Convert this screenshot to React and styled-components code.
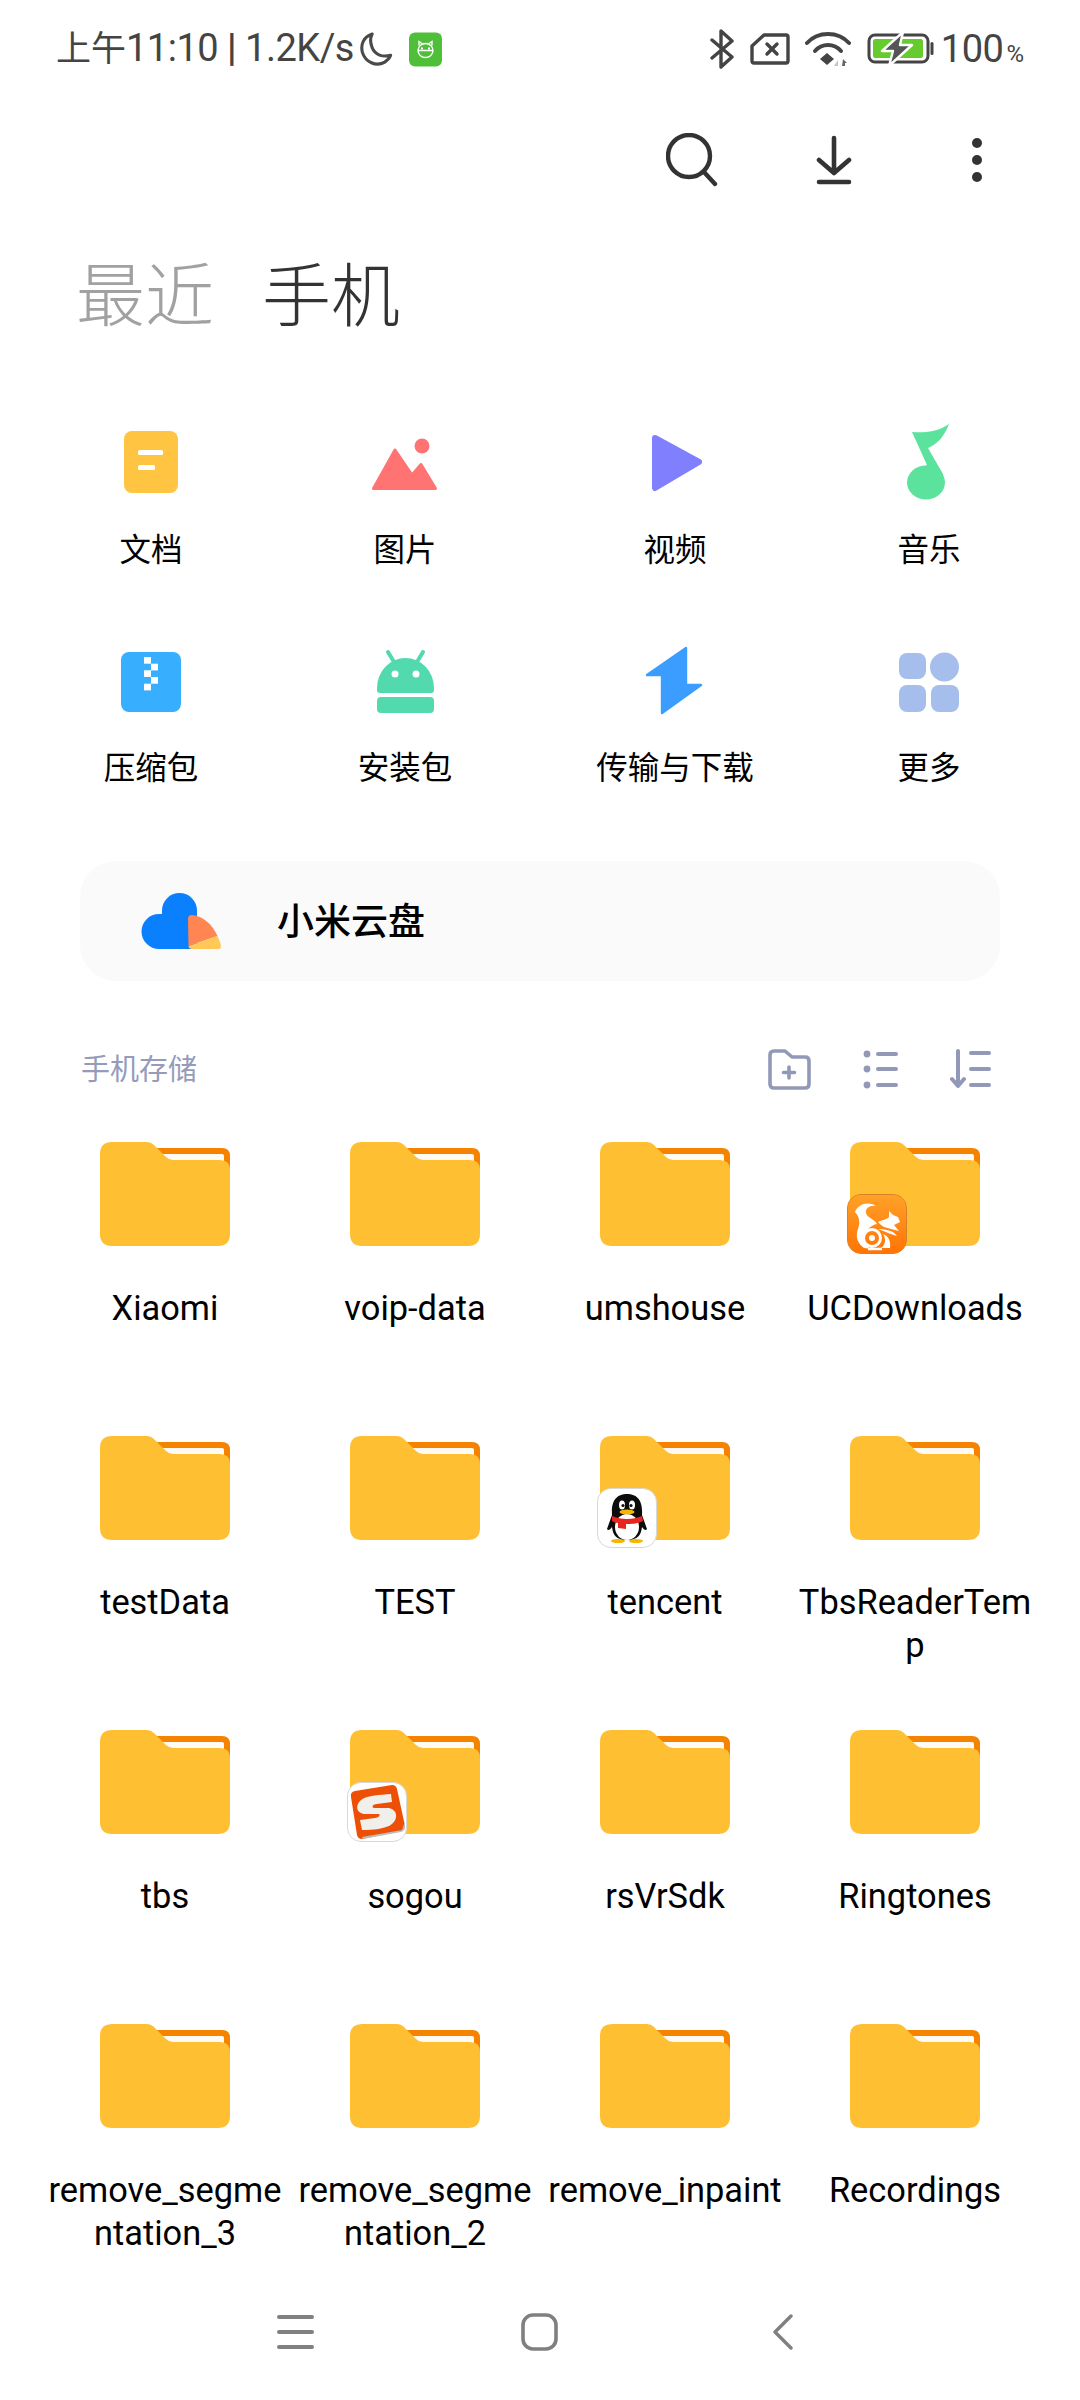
import styled, { createGlobalStyle } from "styled-components";

const GlobalStyle = createGlobalStyle`
  html, body {
    margin: 0;
    padding: 0;
    background: #fff;
  }
  * {
    box-sizing: border-box;
  }
`;

const Page = styled.div`
  width: 1080px;
  height: 2400px;
  display: flex;
  flex-direction: column;
  background: #fff;
  overflow: hidden;
  font-family: Roboto, "Noto Sans CJK SC", sans-serif;
  color: #000;
`;

const StatusBar = styled.div`
  height: 98px;
  padding: 0 56px 0 56px;
  display: flex;
  justify-content: space-between;
  align-items: center;
`;

const StatusGroup = styled.div`
  display: flex;
  align-items: center;
`;

const StatusText = styled.span`
  font-size: 38px;
  line-height: 40px;
  letter-spacing: -0.5px;
  color: #444;
  white-space: pre;
`;

const StatusCjk = styled.span`
  font-size: 35px;
  letter-spacing: 0;
`;

const StatusPipe = styled.span`
  font-weight: 700;
`;

const PercentSign = styled.span`
  font-size: 24px;
  margin-left: 3px;
  color: #444;
`;

const IconSlot = styled.span`
  display: flex;
  margin-left: ${(p) => p.$left || 0}px;
`;

const BatteryLevel = styled.span`
  display: flex;
  align-items: baseline;
  margin-left: 6px;
`;

const Toolbar = styled.div`
  height: 124px;
  padding-right: 32px;
  display: flex;
  justify-content: flex-end;
  align-items: center;
`;

const ToolButton = styled.div`
  width: 142.5px;
  display: flex;
  justify-content: center;
`;

const Tabs = styled.div`
  height: 146px;
  padding: 6px 0 0 76px;
  display: flex;
  align-items: center;
  gap: 48px;
`;

const Tab = styled.div`
  font-size: 69px;
  font-weight: 300;
  line-height: 80px;
  color: ${(p) => (p.$active ? "#333" : "#a1a1a1")};
`;

const Categories = styled.div`
  padding: 49px 24px 0;
  display: flex;
  gap: 16px;
`;

const CategoryHalf = styled.div`
  display: grid;
  grid-template-columns: repeat(2, 254px);
  row-gap: 62px;
`;

const Category = styled.div`
  display: flex;
  flex-direction: column;
  align-items: center;
`;

const CategoryIcon = styled.div`
  width: 90px;
  height: 90px;
  margin-bottom: 22px;
`;

const CategoryLabel = styled.div`
  font-size: 31.5px;
  line-height: 44px;
  white-space: nowrap;
`;

const CloudCard = styled.div`
  margin: 70px 80px 0;
  height: 120px;
  padding-left: 61px;
  border-radius: 36px;
  background: #fafafa;
  display: flex;
  align-items: center;
  gap: 56px;
`;

const CloudLabel = styled.div`
  font-size: 37px;
  font-weight: 500;
  padding-bottom: 5px;
`;

const SectionHeader = styled.div`
  margin-top: 58px;
  height: 60px;
  padding: 0 89px 0 81px;
  display: flex;
  align-items: center;
  justify-content: space-between;
`;

const SectionTitle = styled.div`
  font-size: 29px;
  padding-bottom: 4px;
  color: #959bba;
`;

const SectionTools = styled.div`
  display: flex;
  align-items: center;
  gap: 52px;
`;

const FolderGrid = styled.div`
  margin-top: 43px;
  padding: 0 40px;
  display: grid;
  grid-template-columns: repeat(4, 250px);
  grid-auto-rows: 226px;
  row-gap: 68px;
`;

const FolderCell = styled.div`
  display: flex;
  flex-direction: column;
  align-items: center;
`;

const FolderArt = styled.div`
  position: relative;
  width: 130px;
  height: 104px;
  margin-bottom: 41px;
`;

const Badge = styled.div`
  position: absolute;
  left: -3px;
  bottom: -8px;
  width: 60px;
  height: 60px;
  border-radius: 14px;
  overflow: hidden;
  border: 1px solid ${(p) => p.$edge || "#d8d8d8"};
  background: ${(p) => p.$bg || "#fff"};
`;

const FolderName = styled.div`
  width: 236px;
  font-size: 34.4px;
  line-height: 43px;
  text-align: center;
  word-break: break-all;
`;

const NavBar = styled.div`
  margin-top: auto;
  height: 136px;
  display: flex;
  align-items: center;
  padding-left: 277px;
`;

const NavSlot = styled.div`
  display: flex;
  margin-left: ${(p) => p.$left || 0}px;
`;

const MoonIcon = () => (
  <svg width="34" height="35" viewBox="0 0 34 36" fill="none" stroke="#4a4a4a" strokeWidth="3.2" strokeLinejoin="round">
    <path d="M13 2 C4 5 1 13 3 21 C6 31 17 36 26 31 C29 29 31 27 32 24 C24 26 16 24 13 16 C11 11 11 6 13 2Z" />
  </svg>
);

const RobotBadge = () => (
  <svg width="33" height="35" viewBox="0 0 33 34">
    <rect width="33" height="34" rx="6" fill="#4fbf3a" />
    <g fill="none" stroke="#fff" strokeWidth="1.4">
      <ellipse cx="16.5" cy="18" rx="7.5" ry="7" />
      <path d="M10 13 L10 9 L13 11 M23 13 L23 9 L20 11 M9 18 H24" />
    </g>
    <rect x="12" y="15" width="2" height="2" fill="#fff" />
    <rect x="19" y="15" width="2" height="2" fill="#fff" />
  </svg>
);

const BluetoothIcon = () => (
  <svg width="24" height="40" viewBox="0 0 24 40" fill="none" stroke="#444" strokeWidth="3.4" strokeLinecap="round" strokeLinejoin="round">
    <path d="M2 11 L22 28 L11 38 V2 L22 12 L2 29" />
  </svg>
);

const SimIcon = () => (
  <svg width="40" height="32" viewBox="0 0 40 32" fill="none" stroke="#444" strokeWidth="3.4" strokeLinecap="round" strokeLinejoin="round">
    <path d="M14 2 H36 Q38 2 38 4 V28 Q38 30 36 30 H4 Q2 30 2 28 V13 Z" />
    <path d="M17 11 L27 21 M27 11 L17 21" />
  </svg>
);

const WifiIcon = () => (
  <svg width="46" height="34" viewBox="0 0 46 34" fill="none">
    <g stroke="#444" strokeWidth="4" strokeLinecap="round">
      <path d="M2 11 C13 -1 33 -1 44 11" />
      <path d="M10 19 C17 11 29 11 36 19" />
    </g>
    <path d="M22 21 L29 27 L22 33 L15 27 Z" fill="#444" />
    <path d="M33 28 V34 H29 Z" fill="#c4c4c4" />
    <path d="M38 27 L42 31 H40 V34 H37 Z" fill="#666" />
  </svg>
);

const BatteryIcon = () => (
  <svg width="68" height="34" viewBox="0 0 68 34">
    <rect x="2" y="3" width="59" height="27" rx="6" fill="none" stroke="#444" strokeWidth="3" />
    <rect x="6" y="7" width="50" height="19" rx="2.5" fill="#66cc2e" />
    <rect x="63.5" y="10" width="3" height="13" rx="1.5" fill="#444" />
    <path d="M36 0 L15 19 H26 L22 34 L45 13 H33 Z" fill="#555" stroke="#fff" strokeWidth="2.4" strokeLinejoin="round" />
  </svg>
);

const SearchIcon = () => (
  <svg width="52" height="54" viewBox="0 0 52 54" fill="none" stroke="#333" strokeWidth="4.4" strokeLinecap="round">
    <circle cx="23" cy="23" r="21" />
    <path d="M38 39 L49 51" />
  </svg>
);

const DownloadIcon = () => (
  <svg width="36" height="50" viewBox="0 0 36 50" fill="none" stroke="#333" strokeWidth="4.6" strokeLinecap="round" strokeLinejoin="round">
    <path d="M18 3 V38 M3 25 L18 38 L33 25 M3 47 H33" />
  </svg>
);

const MoreIcon = () => (
  <svg width="12" height="46" viewBox="0 0 12 46" fill="#333">
    <circle cx="6" cy="6" r="5" />
    <circle cx="6" cy="23" r="5" />
    <circle cx="6" cy="40" r="5" />
  </svg>
);

const DocIcon = () => (
  <svg width="90" height="90" viewBox="0 0 90 90">
    <rect x="18" y="14" width="54" height="62" rx="8" fill="#ffc542" />
    <rect x="32" y="33" width="25" height="5" rx="1.5" fill="#fff" />
    <rect x="32" y="48" width="17" height="5" rx="1.5" fill="#fff" />
  </svg>
);

const ImageIcon = () => (
  <svg width="90" height="90" viewBox="0 0 90 90" fill="#ff7373">
    <circle cx="62" cy="29" r="7.5" />
    <path d="M13.5 71.5 L35 33 L52 58 L61 47.5 L75.5 71.5 Z" stroke="#ff7373" strokeWidth="3" strokeLinejoin="round" />
  </svg>
);

const VideoIcon = () => (
  <svg width="90" height="90" viewBox="0 0 90 90">
    <path d="M25 21 L69 45 L25 71 Z" fill="#8080ff" stroke="#8080ff" strokeWidth="6" strokeLinejoin="round" />
  </svg>
);

const MusicIcon = () => (
  <svg width="90" height="90" viewBox="0 0 90 90" fill="#5be39e">
    <path d="M28 15 C44 16 55 14 65 7 C61 18 54 27 44 31 L59 57 L60 66 L40 50 L43 48 Z" />
    <ellipse cx="42" cy="65.5" rx="19" ry="17" />
  </svg>
);

const ZipIcon = () => (
  <svg width="90" height="90" viewBox="0 0 90 90">
    <rect x="15" y="17" width="60" height="60" rx="8" fill="#38aeff" />
    <g fill="#fff">
      <rect x="38" y="22" width="7" height="6.7" />
      <rect x="45" y="28.7" width="7" height="6.7" />
      <rect x="38" y="35.3" width="7" height="6.7" />
      <rect x="45" y="42" width="7" height="6.7" />
      <rect x="38" y="48.7" width="7" height="6.7" />
    </g>
  </svg>
);

const AndroidIcon = () => (
  <svg width="90" height="90" viewBox="0 0 90 90" fill="#52d9ae">
    <path d="M28 17 L34 27 M63 17 L57 27" stroke="#52d9ae" strokeWidth="4" strokeLinecap="round" />
    <path d="M17 53 A28.5 30 0 0 1 74 53 V55 Q74 58 71 58 H20 Q17 58 17 55 Z" />
    <rect x="17" y="62" width="57" height="16" rx="4" />
    <circle cx="35" cy="39" r="3.5" fill="#fff" />
    <circle cx="56" cy="39" r="3.5" fill="#fff" />
  </svg>
);

const TransferIcon = () => (
  <svg width="90" height="90" viewBox="0 0 90 90">
    <path d="M56 13 L17 40 H32 V78 L71 50 H56 Z" fill="#3b9dff" stroke="#3b9dff" strokeWidth="2.4" strokeLinejoin="round" />
  </svg>
);

const MoreAppsIcon = () => (
  <svg width="90" height="90" viewBox="0 0 90 90" fill="#a6beeb">
    <rect x="15" y="18" width="27" height="26" rx="8" />
    <circle cx="60.5" cy="32" r="14.5" />
    <rect x="15" y="50" width="27" height="27" rx="8" />
    <rect x="47" y="50" width="28" height="27" rx="8" />
  </svg>
);

const CloudIcon = () => (
  <svg width="80" height="56" viewBox="0 0 80 56">
    <path d="M18 56 A17.5 17.5 0 0 1 18 21 H21 V17.5 A17.5 17.5 0 0 1 56 17.5 V56 Z" fill="#0a80ff" />
    <path d="M47 26 Q47 22 51 22 C62 23 71 31 76.5 43 L47.5 53 Z" fill="#ff8552" />
    <path d="M47.5 53 L76.5 43 Q79 48 80 53 Q80 56 77 56 H51 Q48 56 47.5 53 Z" fill="#ffc857" />
  </svg>
);

const NewFolderIcon = () => (
  <svg width="43" height="41" viewBox="0 0 43 41" fill="none" stroke="#9299b8" strokeWidth="3.6" strokeLinecap="round" strokeLinejoin="round">
    <path d="M2 6 Q2 2 6 2 H17 L24 8 H37 Q41 8 41 12 V35 Q41 39 37 39 H6 Q2 39 2 35 Z" />
    <path d="M21 18 V29 M15.5 23.5 H26.5" />
  </svg>
);

const ListIcon = () => (
  <svg width="35" height="40" viewBox="0 0 35 40" fill="#9299b8">
    <circle cx="4" cy="5" r="3.4" />
    <circle cx="4" cy="20" r="3.4" />
    <circle cx="4" cy="36" r="3.4" />
    <rect x="13" y="3" width="22" height="4" rx="2" />
    <rect x="13" y="18" width="22" height="4" rx="2" />
    <rect x="13" y="34" width="22" height="4" rx="2" />
  </svg>
);

const SortIcon = () => (
  <svg width="41" height="40" viewBox="0 0 41 40" fill="none" stroke="#9299b8" strokeWidth="4" strokeLinecap="round" strokeLinejoin="round">
    <path d="M8 2 V36 M2 30 L8 37 L14 30" />
    <path d="M21 4 H39 M21 20 H39 M21 36 H39" />
  </svg>
);

const FolderIcon = () => (
  <svg width="130" height="104" viewBox="0 0 130 104">
    <path d="M55 6 H122 Q130 6 130 14 V34 H60 Z" fill="#f58300" />
    <path d="M60 12 H122 Q124 12 124 14 V24 H72 Z" fill="#fffbf2" />
    <path d="M12 0 H47 Q51 0 54 3 L66 15 Q69 18 73 18 H120 Q130 18 130 28 V92 Q130 104 118 104 H12 Q0 104 0 92 V12 Q0 0 12 0 Z" fill="#ffbf33" />
  </svg>
);

const UcLogo = () => (
  <svg width="58" height="58" viewBox="0 0 58 58">
    <defs>
      <linearGradient id="ucBg" x1="0" y1="0" x2="0" y2="1">
        <stop offset="0" stopColor="#ffa128" />
        <stop offset="1" stopColor="#ff7405" />
      </linearGradient>
    </defs>
    <rect width="58" height="58" fill="url(#ucBg)" />
    <path d="M7 17 C10 9 20 6 28 11 C22 10 17 13 18 18 C19 23 27 24 29 29 C23 30 16 36 17 44 C17 50 20 53 24 54 L16 53 C10 49 7 42 10 34 C12 28 12 22 7 17 Z" fill="#fff" />
    <path d="M30 27 C34 25 38 25 41 22 L41 16 L45 20 L50 22 L52 27 L46 30 L51 36 L43 34 L36 32 C34 31 32 29 30 27 Z" fill="#fff" />
    <path d="M30 34 C38 34 46 36 49 41 L40 38 C36 36 33 35 30 34 Z" fill="#fff" />
    <path d="M33 53 C38 50 38 43 35 39 C41 41 43 47 42 53 Z" fill="#fff" />
    <circle cx="24" cy="43" r="8.5" fill="none" stroke="#fff" strokeWidth="3" />
    <circle cx="24" cy="43" r="3" fill="#fff" />
    <path d="M20 54 H34" stroke="#fff" strokeWidth="2.4" />
  </svg>
);

const QqLogo = () => (
  <svg width="58" height="58" viewBox="0 0 58 58">
    <ellipse cx="20" cy="52" rx="7" ry="2" fill="#f7b500" />
    <ellipse cx="38" cy="52" rx="7" ry="2" fill="#f7b500" />
    <path d="M14 26 C13 10 20 5 29 5 C38 5 45 10 44 26 L49 40 C48 42 46 41 44 38 C43 46 40 51 29 51 C18 51 15 46 14 38 C12 41 10 42 9 40 Z" fill="#0c0c0c" />
    <ellipse cx="29" cy="38" rx="12" ry="13" fill="#fff" />
    <ellipse cx="24" cy="16" rx="3" ry="4.5" fill="#fff" />
    <ellipse cx="34" cy="16" rx="3" ry="4.5" fill="#fff" />
    <circle cx="25" cy="16.5" r="1.6" fill="#111" />
    <circle cx="33" cy="16.5" r="1.6" fill="#111" />
    <ellipse cx="29" cy="23" rx="7.5" ry="2.6" fill="#f7b500" />
    <path d="M14 27 C23 31 35 31 44 27 L45 32 C39 35 33 35 28 35 V40 L20 39 V34 C18 34 16 33 14 32 Z" fill="#e8261f" />
  </svg>
);

const SogouLogo = () => (
  <svg width="58" height="58" viewBox="0 0 58 58">
    <path d="M3 14 Q2 9 7 8 L44 2 Q48 2 49 6 L57 43 Q57 47 53 48 L14 56 Q10 56 9 52 Z" fill="#ed4f06" />
    <path d="M14 54 L54 47 L57 38 L57 44 Q57 48 53 49 L15 56 Z" fill="#bdbdbd" />
    <path d="M43 11 C32 12 20 12 13 17 C7 22 8 30 16 31 L31 31 C33 32 30 35 27 35 L12 37 L14 47 C24 47 38 46 44 41 C50 36 50 27 41 25 L26 25 C23 24 25 21 29 21 L44 19 Z" fill="#f1efec" />
  </svg>
);

const MenuNavIcon = () => (
  <svg width="37" height="34" viewBox="0 0 37 34" fill="#808080">
    <rect y="0" width="37" height="4" rx="2" />
    <rect y="15" width="37" height="4" rx="2" />
    <rect y="30" width="37" height="4" rx="2" />
  </svg>
);

const HomeNavIcon = () => (
  <svg width="37" height="38" viewBox="0 0 37 38" fill="none" stroke="#808080" strokeWidth="3.6">
    <rect x="2" y="2" width="33" height="34" rx="10" />
  </svg>
);

const BackNavIcon = () => (
  <svg width="20" height="36" viewBox="0 0 20 36" fill="none" stroke="#808080" strokeWidth="3.4" strokeLinecap="round" strokeLinejoin="round">
    <path d="M18 2 L2 18 L18 34" />
  </svg>
);

const categoryHalves = [
  [
    { label: "文档", Icon: DocIcon },
    { label: "图片", Icon: ImageIcon },
    { label: "压缩包", Icon: ZipIcon },
    { label: "安装包", Icon: AndroidIcon },
  ],
  [
    { label: "视频", Icon: VideoIcon },
    { label: "音乐", Icon: MusicIcon },
    { label: "传输与下载", Icon: TransferIcon },
    { label: "更多", Icon: MoreAppsIcon },
  ],
];

const folders = [
  { name: "Xiaomi" },
  { name: "voip-data" },
  { name: "umshouse" },
  { name: "UCDownloads", Logo: UcLogo, edge: "#d9822b", bg: "#ff8a14" },
  { name: "testData" },
  { name: "TEST" },
  { name: "tencent", Logo: QqLogo },
  { name: "TbsReaderTemp" },
  { name: "tbs" },
  { name: "sogou", Logo: SogouLogo },
  { name: "rsVrSdk" },
  { name: "Ringtones" },
  { name: "remove_segmentation_3" },
  { name: "remove_segmentation_2" },
  { name: "remove_inpaint" },
  { name: "Recordings" },
];

export default function App() {
  return (
    <Page>
      <GlobalStyle />
      <StatusBar>
        <StatusGroup>
          <StatusText>
            <StatusCjk>上午</StatusCjk>11:10 <StatusPipe>|</StatusPipe> 1.2K/s
          </StatusText>
          <IconSlot $left={5}>
            <MoonIcon />
          </IconSlot>
          <IconSlot $left={16}>
            <RobotBadge />
          </IconSlot>
        </StatusGroup>
        <StatusGroup>
          <BluetoothIcon />
          <IconSlot $left={16}>
            <SimIcon />
          </IconSlot>
          <IconSlot $left={15}>
            <WifiIcon />
          </IconSlot>
          <IconSlot $left={16}>
            <BatteryIcon />
          </IconSlot>
          <BatteryLevel>
            <StatusText>100</StatusText>
            <PercentSign>%</PercentSign>
          </BatteryLevel>
        </StatusGroup>
      </StatusBar>

      <Toolbar>
        <ToolButton>
          <SearchIcon />
        </ToolButton>
        <ToolButton>
          <DownloadIcon />
        </ToolButton>
        <ToolButton>
          <MoreIcon />
        </ToolButton>
      </Toolbar>

      <Tabs>
        <Tab>最近</Tab>
        <Tab $active>手机</Tab>
      </Tabs>

      <Categories>
        {categoryHalves.map((half, index) => (
          <CategoryHalf key={index}>
            {half.map(({ label, Icon }) => (
              <Category key={label}>
                <CategoryIcon>
                  <Icon />
                </CategoryIcon>
                <CategoryLabel>{label}</CategoryLabel>
              </Category>
            ))}
          </CategoryHalf>
        ))}
      </Categories>

      <CloudCard>
        <CloudIcon />
        <CloudLabel>小米云盘</CloudLabel>
      </CloudCard>

      <SectionHeader>
        <SectionTitle>手机存储</SectionTitle>
        <SectionTools>
          <NewFolderIcon />
          <ListIcon />
          <SortIcon />
        </SectionTools>
      </SectionHeader>

      <FolderGrid>
        {folders.map(({ name, Logo, edge, bg }) => (
          <FolderCell key={name}>
            <FolderArt>
              <FolderIcon />
              {Logo && (
                <Badge $edge={edge} $bg={bg}>
                  <Logo />
                </Badge>
              )}
            </FolderArt>
            <FolderName>{name}</FolderName>
          </FolderCell>
        ))}
      </FolderGrid>

      <NavBar>
        <MenuNavIcon />
        <NavSlot $left={207}>
          <HomeNavIcon />
        </NavSlot>
        <NavSlot $left={215}>
          <BackNavIcon />
        </NavSlot>
      </NavBar>
    </Page>
  );
}
